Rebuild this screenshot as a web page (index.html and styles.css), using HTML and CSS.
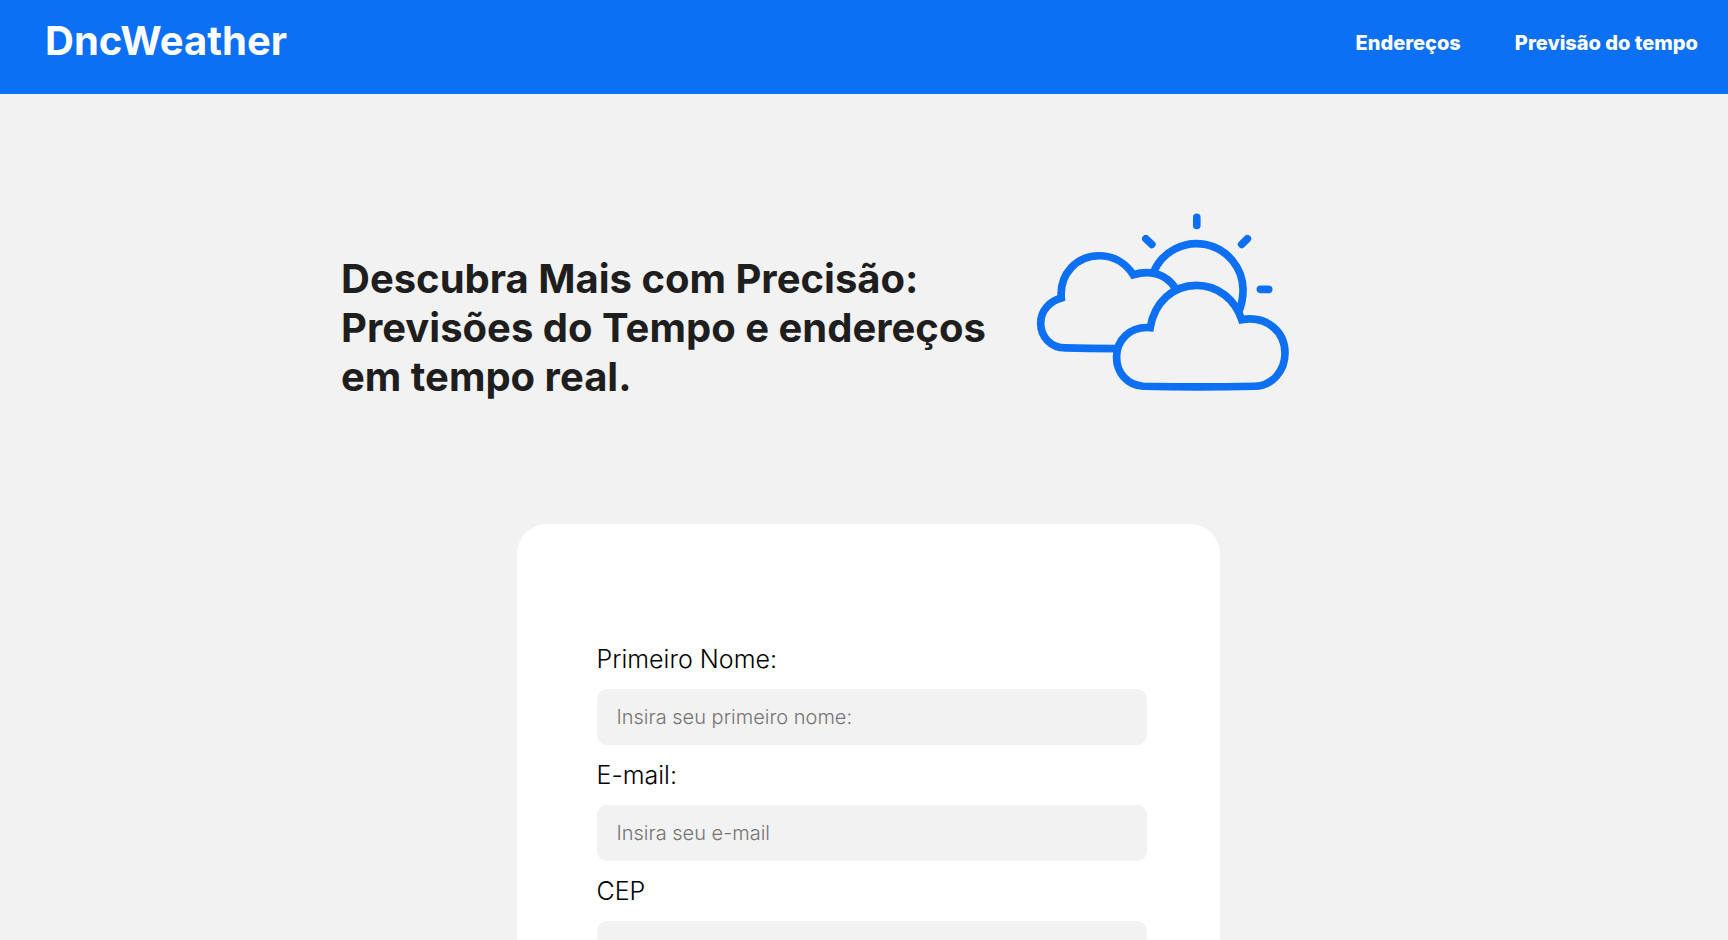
FILE: index.html
```html
<!DOCTYPE html>
<html lang="pt-BR">
<head>
  <meta charset="utf-8">
  <meta name="viewport" content="width=device-width, initial-scale=1">
  <title>DncWeather</title>
  <link rel="stylesheet" href="styles.css">
</head>
<body>
  <header class="header">
    <div class="logo">DncWeather</div>
    <nav class="nav">
      <a class="nav-link" href="#enderecos">Endereços</a>
      <a class="nav-link" href="#previsao">Previsão do tempo</a>
    </nav>
  </header>
  <main class="main">
    <section class="hero">
      <h1 class="hero-title">Descubra Mais com Precisão: Previsões do Tempo e endereços em tempo real.</h1>
      <svg class="hero-icon" viewBox="48 40 760 532" aria-hidden="true">
        <g fill="none" stroke="#0d70f2" stroke-width="23">
          <path d="M288 446Q200 446 136 444C92 444 62 410 62 370C62 330 90 304 124 294C118 222 170 167 238 167C282 167 318 190 340 224C396 208 440 224 468 266"/>
          <path d="M402 214A140 140 0 0 1 670 268Q670 305 657 336"/>
          <path d="M391 383C404 306 460 256 530 256C594 256 646 298 666 359C744 346 796 398 796 459C796 514 756 559 705 559Q530 563 370 559C322 556 290 518 290 472C290 420 330 378 391 383Z"/>
          <path stroke-linecap="round" d="M531 52V76M378 116L396 133M683 116L666 133M722 268H747"/>
        </g>
      </svg>
    </section>
    <form class="card">
      <label class="label" for="nome">Primeiro Nome:</label>
      <input class="input" id="nome" type="text" placeholder="Insira seu primeiro nome:">
      <label class="label" for="email">E-mail:</label>
      <input class="input" id="email" type="email" placeholder="Insira seu e-mail">
      <label class="label" for="cep">CEP</label>
      <input class="input" id="cep" type="text">
    </form>
  </main>
</body>
</html>
```
FILE: styles.css
```css
* {
  box-sizing: border-box;
}

body {
  margin: 0;
  background: #f2f2f2;
  font-family: Inter, sans-serif;
}

.header {
  display: flex;
  justify-content: space-between;
  align-items: flex-start;
  padding: 16px 30px 28px 45px;
  background: #0b70f3;
  color: #fff;
}

.logo {
  font-size: 40px;
  font-weight: 700;
  line-height: 50px;
}

.nav {
  display: flex;
  gap: 54px;
  padding-top: 15px;
}

.nav-link {
  color: #fff;
  font-size: 20px;
  font-weight: 800;
  line-height: 24px;
  text-decoration: none;
}

.main {
  padding-left: 8px;
}

.hero {
  display: flex;
  justify-content: center;
  gap: 35px;
  padding: 119px 106px 123px 0;
}

.hero-title {
  width: 660px;
  margin: 41px 0 0;
  color: #1e1e1e;
  font-size: 40px;
  font-weight: 700;
  line-height: 49px;
}

.hero-icon {
  flex: none;
  width: 253px;
  height: 178px;
  overflow: visible;
}

.card {
  display: flex;
  flex-direction: column;
  width: 703px;
  max-width: 100%;
  margin: 0 auto;
  padding: 105px 73px 80px 80px;
  border-radius: 30px;
  background: #fff;
}

.label {
  padding: 15px 0;
  color: #000;
  font-size: 25px;
  font-weight: 300;
  line-height: 30px;
}

.input {
  width: 100%;
  height: 56px;
  padding: 0 20px;
  border: 0;
  border-radius: 10px;
  background: #f2f2f2;
  font-family: inherit;
  font-size: 20px;
  font-weight: 300;
}

.input::placeholder {
  color: #757575;
}
```
